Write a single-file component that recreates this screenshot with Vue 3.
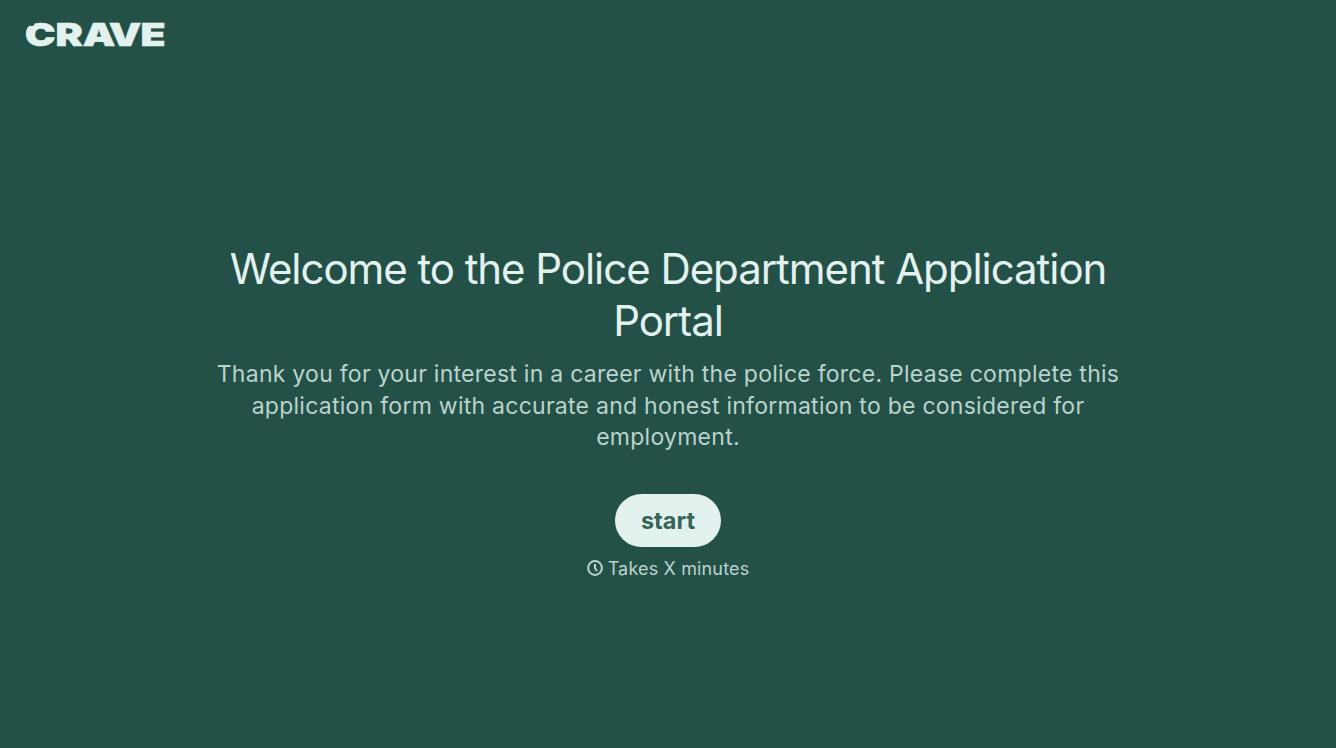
<script setup>
import { ref } from 'vue'

const title = ref('Welcome to the Police Department Application Portal')
const description = ref(
    'Thank you for your interest in a career with the police force. Please complete this application form with accurate and honest information to be considered for employment.'
)
const duration = ref('Takes X minutes')
</script>

<template>
    <div class="page">
        <!--brand-->
        <header class="header">
            <svg class="logo" width="160" height="48" viewBox="0 0 160 48" role="img" aria-label="Crave">
                <text class="logo-text" transform="translate(0 36) scale(1.28 1)" x="0 23.8 45.1 65.4 90.3">CRAVE</text>
                <!--bite on the C-->
                <path class="notch" d="M0 8H11L9.4 14.4L7.4 16.4L5 18L0 21Z" />
                <path class="lobe" d="M1.4 24C1 19.6 2.4 16.6 4.8 15.8C6.2 15.4 7.4 17 9.2 15.4L13 16L8 24Z" />
            </svg>
        </header>

        <!--welcome screen-->
        <main class="welcome">
            <h1>{{ title }}</h1>
            <p class="description">{{ description }}</p>
            <button class="start" type="button">start</button>
            <div class="duration">
                <svg class="clock" width="16" height="16" viewBox="0 0 16 16">
                    <circle cx="8" cy="8" r="6.9" />
                    <path d="M8 4V8.2L10 11" />
                </svg>
                <span>{{ duration }}</span>
            </div>
        </main>
    </div>
</template>

<style>
body {
    margin: 0;
    background-color: #235147;
}
</style>

<style scoped>
.page {
    display: flex;
    flex-direction: column;
    height: 100vh;
    background-color: #235147;
    color: #e3f2ef;
    font-family: Inter, sans-serif;
}

.header {
    display: flex;
    align-items: flex-start;
    padding: 10px 25px 0;
}

.logo {
    overflow: visible;
}

.logo-text {
    font-size: 32px;
    font-weight: 900;
    fill: #e3f2ef;
    stroke: #e3f2ef;
    stroke-width: 0.5px;
}

.notch {
    fill: #235147;
}

.lobe {
    fill: #e3f2ef;
}

.welcome {
    display: flex;
    flex-direction: column;
    align-items: center;
    width: 920px;
    margin: 185px auto 0;
    text-align: center;
}

h1 {
    margin: 0;
    font-size: 42px;
    font-weight: 400;
    line-height: 52px;
    letter-spacing: -1.05px;
}

.description {
    margin: 12px 0 0;
    color: #bbd3cd;
    font-size: 23px;
    line-height: 31.6px;
    letter-spacing: 0.26px;
}

.start {
    width: 106px;
    height: 53px;
    margin-top: 40px;
    padding: 0;
    border: none;
    border-radius: 27px;
    background-color: #e3f2ef;
    color: #35665b;
    font-family: inherit;
    font-size: 23.5px;
    font-weight: 700;
    cursor: pointer;
}

.duration {
    display: flex;
    align-items: center;
    gap: 5px;
    margin-top: 10px;
    color: #bbd3cd;
    font-size: 18px;
    line-height: 24px;
    letter-spacing: 0.15px;
}

.clock {
    fill: none;
    stroke: #bbd3cd;
    stroke-width: 2;
    margin-bottom: 2.5px;
}
</style>
